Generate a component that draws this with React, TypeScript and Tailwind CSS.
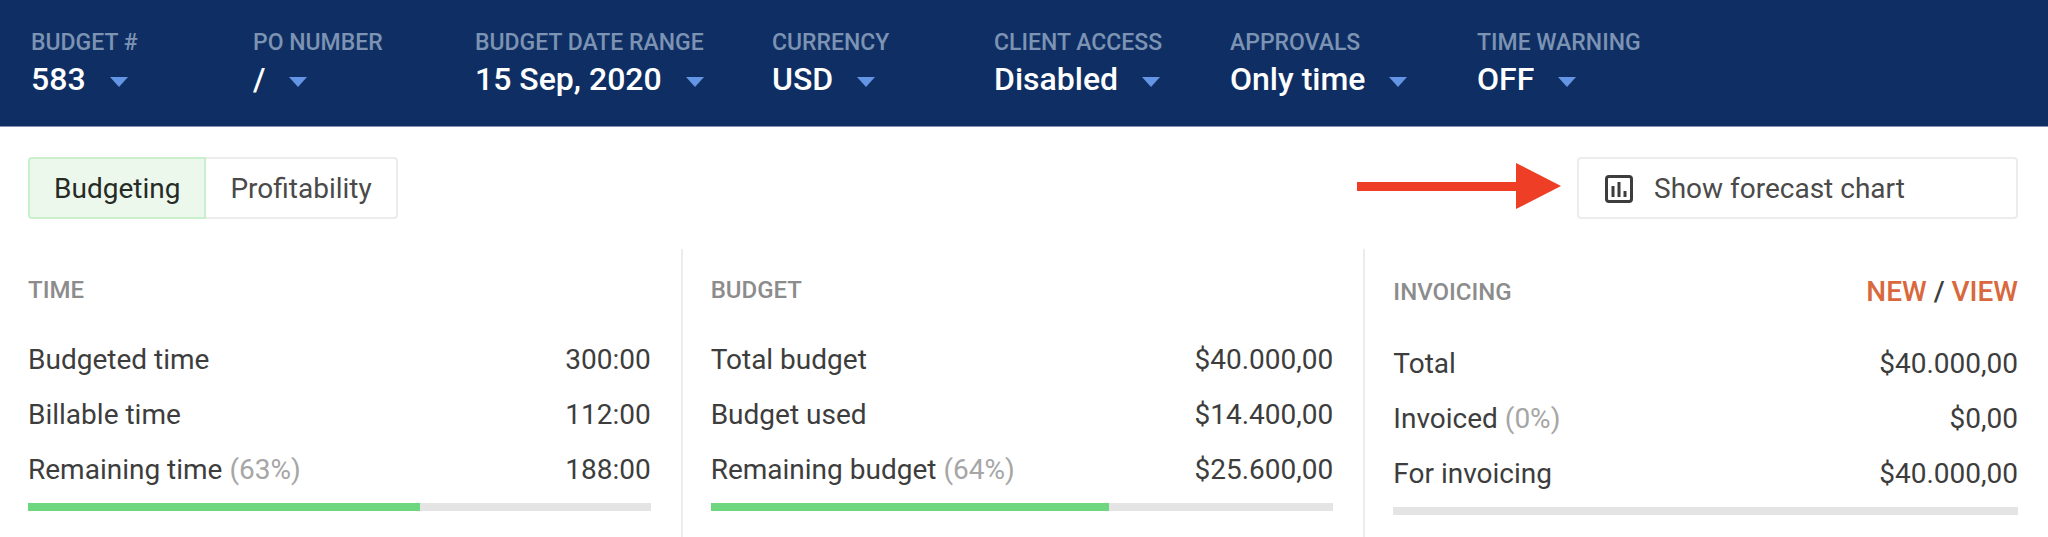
import { useState } from "react";
import type { ReactNode } from "react";

const fields = [
  { id: "budget", label: "BUDGET #", value: "583", width: "w-[222px]" },
  { id: "po", label: "PO NUMBER", value: "/", width: "w-[222px]" },
  { id: "dates", label: "BUDGET DATE RANGE", value: "15 Sep, 2020", width: "w-[297px]" },
  { id: "currency", label: "CURRENCY", value: "USD", width: "w-[222px]" },
  { id: "access", label: "CLIENT ACCESS", value: "Disabled", width: "w-[236px]" },
  { id: "approvals", label: "APPROVALS", value: "Only time", width: "w-[247px]" },
  { id: "warning", label: "TIME WARNING", value: "OFF", width: "w-[222px]" },
];

type Row = { name: string; percent?: string; value: string };

const timeRows: Row[] = [
  { name: "Budgeted time", value: "300:00" },
  { name: "Billable time", value: "112:00" },
  { name: "Remaining time", percent: "(63%)", value: "188:00" },
];

const budgetRows: Row[] = [
  { name: "Total budget", value: "$40.000,00" },
  { name: "Budget used", value: "$14.400,00" },
  { name: "Remaining budget", percent: "(64%)", value: "$25.600,00" },
];

const invoicingRows: Row[] = [
  { name: "Total", value: "$40.000,00" },
  { name: "Invoiced", percent: "(0%)", value: "$0,00" },
  { name: "For invoicing", value: "$40.000,00" },
];

function HeaderField({ id, label, value, width }: (typeof fields)[number]) {
  return (
    <div className={`${width} shrink-0`}>
      <label htmlFor={id} className="block text-[23px] leading-8 font-medium text-[#7c93b3]">
        {label}
      </label>
      <div className="relative w-fit">
        <select
          id={id}
          className="block h-10 field-sizing-content appearance-none bg-transparent pr-[42px] text-[32px] leading-10 font-medium text-white"
        >
          <option>{value}</option>
        </select>
        <svg viewBox="0 0 18 10" className="pointer-events-none absolute right-0 bottom-3 h-[10px] w-[18px]">
          <path d="M0 0h18L9 10z" fill="#6494e4" />
        </svg>
      </div>
    </div>
  );
}

function Panel({
  title,
  rows,
  progress,
  last,
  children,
}: {
  title: string;
  rows: Row[];
  progress: number;
  last?: boolean;
  children?: ReactNode;
}) {
  return (
    <section className={`pt-[23px] pr-[30px] pl-7 ${last ? "" : "border-r-2 border-[#ececec]"}`}>
      <div className="flex items-center justify-between">
        <h2 className="text-[24px] leading-9 font-medium text-[#8c8c8c]">{title}</h2>
        {children}
      </div>
      <table className="mt-6 w-full text-[28px] text-[#3d3d3d]">
        <tbody>
          {rows.map((row) => (
            <tr key={row.name} className="h-[55px]">
              <th scope="row" className="p-0 text-left font-normal">
                {row.name}
                {row.percent && <span className="text-[#a6a6a6]"> {row.percent}</span>}
              </th>
              <td className="p-0 text-right">{row.value}</td>
            </tr>
          ))}
        </tbody>
      </table>
      <div
        role="progressbar"
        aria-label={title}
        aria-valuenow={progress}
        className="mt-[6px] h-2 bg-[#e4e4e4]"
      >
        <div className="h-full bg-[#6fd680]" style={{ width: `${progress}%` }} />
      </div>
    </section>
  );
}

export default function App() {
  const [tab, setTab] = useState("Budgeting");

  return (
    <div className="flex min-h-screen flex-col bg-white font-['Roboto',sans-serif]">
      <header className="flex border-b border-[#8590b4] bg-[#0f2f64] pt-[27px] pb-[27px] pl-[31px]">
        {fields.map((field) => (
          <HeaderField key={field.id} {...field} />
        ))}
      </header>

      <div className="flex items-center justify-between pt-[30px] pr-[30px] pb-[30px] pl-7">
        <div className="flex">
          {["Budgeting", "Profitability"].map((name) => (
            <button
              key={name}
              type="button"
              aria-pressed={tab === name}
              onClick={() => setTab(name)}
              className={`h-[62px] border-2 px-6 pt-0.5 text-[28px] first:rounded-l last:rounded-r ${
                tab === name
                  ? "border-[#c9efcc] bg-[#ecf8ec] text-[#262b26]"
                  : "border-[#ececec] text-[#4a4a4a] last:border-l-0 first:border-r-0"
              }`}
            >
              {name}
            </button>
          ))}
        </div>

        <div className="flex items-center gap-4">
          <svg viewBox="0 0 204 46" className="mb-1 h-[46px] w-[204px]" aria-hidden="true">
            <path d="M0 19h159V0l45 23-45 23V28H0z" fill="#ee3e25" />
          </svg>
          <button
            type="button"
            className="flex h-[62px] w-[441px] items-center gap-[21px] rounded border-2 border-[#ececec] px-[26px] pt-0.5 text-[28px] text-[#4a4a4a]"
          >
            <svg viewBox="0 0 28 28" className="size-7" fill="none" stroke="#3d3d3d">
              <rect x="1.5" y="1.5" width="25" height="25" rx="2.5" strokeWidth="3" />
              <path d="M8 11v11M14 7v15M20 16v6" strokeWidth="3" />
            </svg>
            Show forecast chart
          </button>
        </div>
      </div>

      <main className="grid flex-1 grid-cols-3">
        <Panel title="TIME" rows={timeRows} progress={63} />
        <Panel title="BUDGET" rows={budgetRows} progress={64} />
        <Panel title="INVOICING" rows={invoicingRows} progress={0} last>
          <p className="text-[28px] leading-10 font-medium text-[#3d3d3d]">
            <a href="#new" className="text-[#d9683c]">NEW</a> / <a href="#view" className="text-[#d9683c]">VIEW</a>
          </p>
        </Panel>
      </main>
    </div>
  );
}
